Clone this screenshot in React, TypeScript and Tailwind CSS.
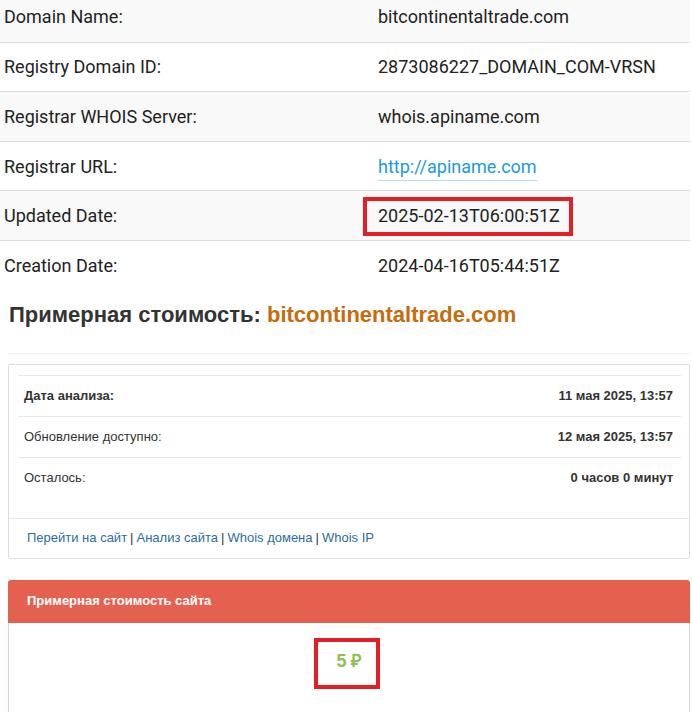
import React from "react";

const rows: { label: string; value: string; link?: boolean }[] = [
  { label: "Domain Name:", value: "bitcontinentaltrade.com" },
  { label: "Registry Domain ID:", value: "2873086227_DOMAIN_COM-VRSN" },
  { label: "Registrar WHOIS Server:", value: "whois.apiname.com" },
  { label: "Registrar URL:", value: "http://apiname.com", link: true },
  { label: "Updated Date:", value: "2025-02-13T06:00:51Z" },
  { label: "Creation Date:", value: "2024-04-16T05:44:51Z" },
];

const info = [
  { label: "Дата анализа:", value: "11 мая 2025, 13:57", bold: true },
  { label: "Обновление доступно:", value: "12 мая 2025, 13:57", bold: false },
  { label: "Осталось:", value: "0 часов 0 минут", bold: false },
];

export default function App() {
  return (
    <div className="relative w-[692px] h-[712px] overflow-hidden bg-white">
      {/* WHOIS table */}
      <div className="-mt-[8px] w-[690px] font-['Roboto',sans-serif] text-[18px] text-[#222]">
        {rows.map((r, i) => (
          <div
            key={r.label}
            className={`flex items-center h-[49.6px] ${i > 0 ? "border-t border-[#dddddd]" : ""} ${i % 2 === 0 ? "bg-[#f9f9f9]" : "bg-white"}`}
          >
            <div className="w-[378px] pl-[4px]">{r.label}</div>
            <div>
              {r.link ? (
                <span className="text-[#1b9bd7] border-b border-[#b3dcf3] pb-[3px]">{r.value}</span>
              ) : (
                r.value
              )}
            </div>
          </div>
        ))}
      </div>

      {/* Heading */}
      <div className="ml-[8px] w-[682px] mt-[12px] pb-[25px] border-b border-[#eeeeee]">
        <h2 className="font-['Liberation_Sans',Arial,sans-serif] font-bold text-[22px] leading-[26px] text-[#333] pl-[1px]">
          Примерная стоимость: <span className="text-[#c46c0e]">bitcontinentaltrade.com</span>
        </h2>
      </div>

      {/* Info card */}
      <div className="ml-[8px] mt-[10px] w-[682px] border border-[#dddddd] rounded-[2px] font-['Liberation_Sans',Arial,sans-serif] text-[13px] text-[#333]">
        <div className="pt-[10px] pl-[9px] pr-[8px] pb-[20px]">
          {info.map((r) => (
            <div
              key={r.label}
              className="flex items-center justify-between h-[41px] pl-[6px] pr-[8px] border-t border-[#e8e8e8]"
            >
              <span className={r.bold ? "font-bold" : ""}>{r.label}</span>
              <span className="font-bold">{r.value}</span>
            </div>
          ))}
        </div>
        <div className="h-[40px] flex items-center px-[18px] border-t border-[#e8e8e8]">
          <span className="text-[#2d6ca2]">Перейти на сайт</span>
          <span className="mx-[3px]">|</span>
          <span className="text-[#2d6ca2]">Анализ сайта</span>
          <span className="mx-[3px]">|</span>
          <span className="text-[#2d6ca2]">Whois домена</span>
          <span className="mx-[3px]">|</span>
          <span className="text-[#2d6ca2]">Whois IP</span>
        </div>
      </div>

      {/* Price panel */}
      <div className="ml-[8px] mt-[21px] w-[682px] font-['Liberation_Sans',Arial,sans-serif]">
        <div className="h-[43px] flex items-center pl-[19px] bg-[#e46150] rounded-t-[3px] text-white font-bold text-[13px]">
          Примерная стоимость сайта
        </div>
        <div className="border-x border-[#eecdc8] h-[120px] pt-[26px] flex justify-center">
          <span className="text-[#8cc152] font-bold text-[18px] leading-[24px]">5 ₽</span>
        </div>
      </div>

      {/* Annotation boxes */}
      <div className="absolute left-[363px] top-[197px] w-[210px] h-[39px] border-[4px] border-[#e31e24]" />
      <div className="absolute left-[314px] top-[638px] w-[66px] h-[51px] border-[4px] border-[#e31e24]" />
    </div>
  );
}
